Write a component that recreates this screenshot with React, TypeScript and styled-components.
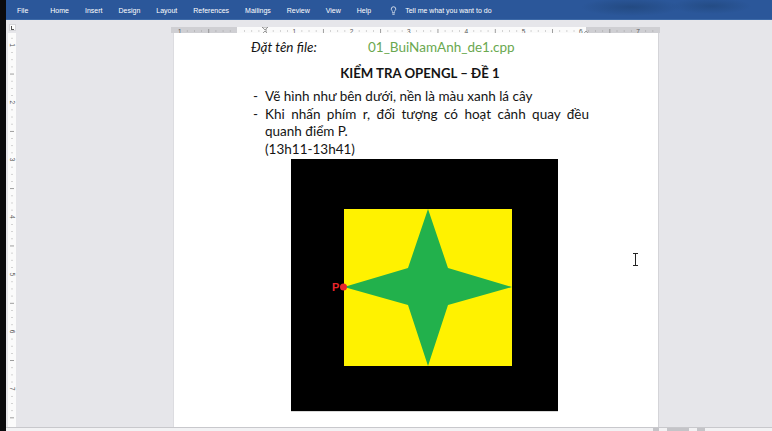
import React from 'react';
import styled, {createGlobalStyle} from 'styled-components';
import {Lightbulb} from 'lucide-react';

const GlobalStyle = createGlobalStyle`
  html, body {
    margin: 0;
    padding: 0;
    background: #000;
  }
  * {
    box-sizing: border-box;
  }
`;

const Screen = styled.div`
  width: 772px;
  height: 431px;
  display: flex;
  overflow: hidden;
  background: #000;
`;

const Bezel = styled.div`
  width: 6px;
  flex: none;
  background: #0b0b0d;
`;

const Window = styled.div`
  flex: 1;
  display: flex;
  flex-direction: column;
  min-width: 0;
`;

const Ribbon = styled.div`
  height: 20px;
  flex: none;
  display: flex;
  align-items: center;
  gap: 16px;
  padding: 1px 0 0 11px;
  background:
    radial-gradient(ellipse 50px 9px at 625px 7px, #234a82, transparent),
    radial-gradient(ellipse 40px 8px at 705px 6px, #244c85, transparent),
    #2b579a;
  border-bottom: 1px solid #3d6aa8;
  font-family: "Liberation Sans", Arial, sans-serif;
  font-size: 7px;
  color: #fff;
`;

const Tab = styled.span<{$spaced?: boolean}>`
  white-space: nowrap;
  margin-right: ${p => (p.$spaced ? '6px' : '0')};
`;

const TellMe = styled.span`
  display: flex;
  align-items: center;
  gap: 7px;
  margin-left: 2px;
  white-space: nowrap;
`;

const RulerRow = styled.div`
  height: 13px;
  flex: none;
  display: flex;
  align-items: flex-start;
  background: #e6e6ea;
`;

const CornerButton = styled.div`
  width: 7px;
  height: 7px;
  margin: 4px 0 0 3px;
  background: #fbfbfb;
  border: 1px solid #d6d6da;
  position: relative;
  &::before {
    content: '';
    position: absolute;
    left: 1px;
    top: 1px;
    width: 2px;
    height: 3px;
    border-left: 1px solid #555;
    border-bottom: 1px solid #555;
  }
`;

const HRulerWrap = styled.div`
  margin: 3px 0 0 155px;
  height: 10px;
`;

const Workspace = styled.div`
  flex: 1;
  display: flex;
  min-height: 0;
  background: #e6e6ea;
`;

const VRulerWrap = styled.div`
  width: 8px;
  margin-left: 2px;
  flex: none;
`;

const Canvas = styled.div`
  flex: 1;
  position: relative;
  padding-left: 157px;
  overflow: hidden;
`;

const Page = styled.div`
  width: 486px;
  height: 100%;
  background: #fff;
  border-right: 1px solid #d4d4d8;
  border-left: 1px solid #dcdce0;
  padding: 6px 0 0 77px;
  font-family: Lato, "Open Sans", sans-serif;
  font-size: 13.5px;
  line-height: 17.5px;
  color: #141414;
`;

const Column = styled.div`
  width: 338px;
`;

const FileRow = styled.div`
  display: flex;
`;

const FileLabel = styled.span`
  width: 117px;
  font-style: italic;
`;

const FileName = styled.span`
  color: #6aa84f;
`;

const Title = styled.div`
  margin-top: 8px;
  text-align: center;
  font-weight: 700;
  font-size: 13.2px;
`;

const BulletList = styled.ul`
  list-style: none;
  margin: 6px 0 0;
  padding: 0;
`;

const Bullet = styled.li`
  display: flex;
  padding-left: 2px;
`;

const Dash = styled.span`
  width: 12px;
  flex: none;
`;

const BulletText = styled.div`
  flex: 1;
`;

const JustifiedLine = styled.span`
  display: block;
  text-align: justify;
  text-align-last: justify;
`;

const Figure = styled.div`
  margin: 1px 0 0 40px;
  width: 267px;
  height: 253px;
  border-bottom: 1px solid #d8d8d8;
`;

const IBeam = styled.svg`
  position: absolute;
  left: 616px;
  top: 220px;
`;

const ScrollStrip = styled.div`
  height: 4px;
  flex: none;
  background: #f2f2f4;
  border-top: 1px solid #c8c8cc;
  display: flex;
  padding-left: 647px;
  gap: 8px;
`;

const ScrollMark = styled.span<{$w: number}>`
  width: ${p => p.$w}px;
  height: 3px;
  background: #c4c4c8;
`;

const UNIT = 57.3;

const HRuler = () => {
  const zero = 66;
  const ticks: React.ReactNode[] = [];
  for (let i = -8; i < 8 * 8; i++) {
    const x = zero + (i * UNIT) / 8;
    if (x < 1 || x > 487) continue;
    if (i % 8 === 0) {
      const n = Math.abs(i / 8);
      if (n === 0) continue;
      ticks.push(
        <text key={i} x={x} y={6.5} fontSize={6.5} textAnchor="middle" fill="#555" fontFamily="Liberation Sans, Arial, sans-serif">
          {n}
        </text>,
      );
    } else if (i % 4 === 0) {
      ticks.push(<rect key={i} x={x} y={2} width={0.8} height={4} fill="#888" />);
    } else {
      ticks.push(<rect key={i} x={x} y={3.5} width={0.8} height={1} fill="#999" />);
    }
  }
  return (
    <svg width={489} height={10} viewBox="0 0 489 10">
      <rect x={0} y={0} width={489} height={8} fill="#cfcfd3" />
      <rect x={66} y={0} width={349} height={8} fill="#fbfbfb" />
      {ticks}
      <path d="M91 0 L97 0 L94 3 Z" fill="#f4f4f4" stroke="#777" strokeWidth={0.7} />
      <path d="M94 4 L97 7 L91 7 Z" fill="#f4f4f4" stroke="#777" strokeWidth={0.7} />
      <rect x={91} y={7} width={6} height={3} fill="#f4f4f4" stroke="#777" strokeWidth={0.7} />
      <path d="M415 4 L418 7.5 L412 7.5 Z" fill="#f4f4f4" stroke="#777" strokeWidth={0.7} />
    </svg>
  );
};

const VRuler = () => {
  const items: React.ReactNode[] = [];
  const zero = 12 - UNIT;
  for (let i = 1; i < 8 * 8; i++) {
    const y = zero + (i * UNIT) / 8;
    if (y < 2 || y > 390) continue;
    if (i % 8 === 0) {
      const n = i / 8;
      items.push(
        <text key={i} x={4} y={y} fontSize={6.5} textAnchor="middle" dominantBaseline="middle" fill="#555" fontFamily="Liberation Sans, Arial, sans-serif" transform={`rotate(90 4 ${y})`}>
          {n}
        </text>,
      );
    } else if (i % 4 === 0) {
      items.push(<rect key={i} x={2} y={y} width={4} height={0.8} fill="#888" />);
    } else {
      items.push(<rect key={i} x={3.5} y={y} width={1} height={0.8} fill="#999" />);
    }
  }
  return (
    <svg width={8} height={394} viewBox="0 0 8 394">
      <rect x={0} y={0} width={8} height={394} fill="#fbfbfb" />
      {items}
    </svg>
  );
};

const StarFigure = () => (
  <svg width={267} height={252} viewBox="0 0 267 252">
    <rect x={0} y={0} width={267} height={252} fill="#000" />
    <rect x={53} y={50} width={168} height={157} fill="#fff200" />
    <polygon
      points="137,50 157,109 221,128 157,146 137,207 117,146 53,128 117,109"
      fill="#22b14c"
    />
    <circle cx={52.5} cy={128} r={3.5} fill="#e8262c" />
    <text x={41} y={132} fontSize={11} fontWeight={700} fill="#e8262c" fontFamily="Liberation Sans, Arial, sans-serif">
      P
    </text>
  </svg>
);

const tabs = ['Home', 'Insert', 'Design', 'Layout', 'References', 'Mailings', 'Review', 'View', 'Help'];

const App = () => (
  <>
    <GlobalStyle />
    <Screen>
      <Bezel />
      <Window>
        <Ribbon>
          <Tab $spaced>File</Tab>
          {tabs.map(t => (
            <Tab key={t}>{t}</Tab>
          ))}
          <TellMe>
            <Lightbulb size={9} strokeWidth={2} color="#fff" />
            Tell me what you want to do
          </TellMe>
        </Ribbon>
        <RulerRow>
          <CornerButton />
          <HRulerWrap>
            <HRuler />
          </HRulerWrap>
        </RulerRow>
        <Workspace>
          <VRulerWrap>
            <VRuler />
          </VRulerWrap>
          <Canvas>
            <Page>
              <Column>
                <FileRow>
                  <FileLabel>Đặt tên file:</FileLabel>
                  <FileName>01_BuiNamAnh_de1.cpp</FileName>
                </FileRow>
                <Title>KIỂM TRA OPENGL – ĐỀ 1</Title>
                <BulletList>
                  <Bullet>
                    <Dash>-</Dash>
                    <BulletText>Vẽ hình như bên dưới, nền là màu xanh lá cây</BulletText>
                  </Bullet>
                  <Bullet>
                    <Dash>-</Dash>
                    <BulletText>
                      <JustifiedLine>Khi nhấn phím r, đối tượng có hoạt cảnh quay đều</JustifiedLine>
                      quanh điểm P.
                      <br />
                      (13h11-13h41)
                    </BulletText>
                  </Bullet>
                </BulletList>
                <Figure>
                  <StarFigure />
                </Figure>
              </Column>
            </Page>
            <IBeam width={7} height={13} viewBox="0 0 7 13">
              <path d="M1 0.5 H6 M3.5 0.5 V12.5 M1 12.5 H6" stroke="#222" strokeWidth={1} fill="none" />
            </IBeam>
          </Canvas>
        </Workspace>
        <ScrollStrip>
          <ScrollMark $w={6} />
          <ScrollMark $w={22} />
          <ScrollMark $w={8} />
        </ScrollStrip>
      </Window>
    </Screen>
  </>
);

export default App;
